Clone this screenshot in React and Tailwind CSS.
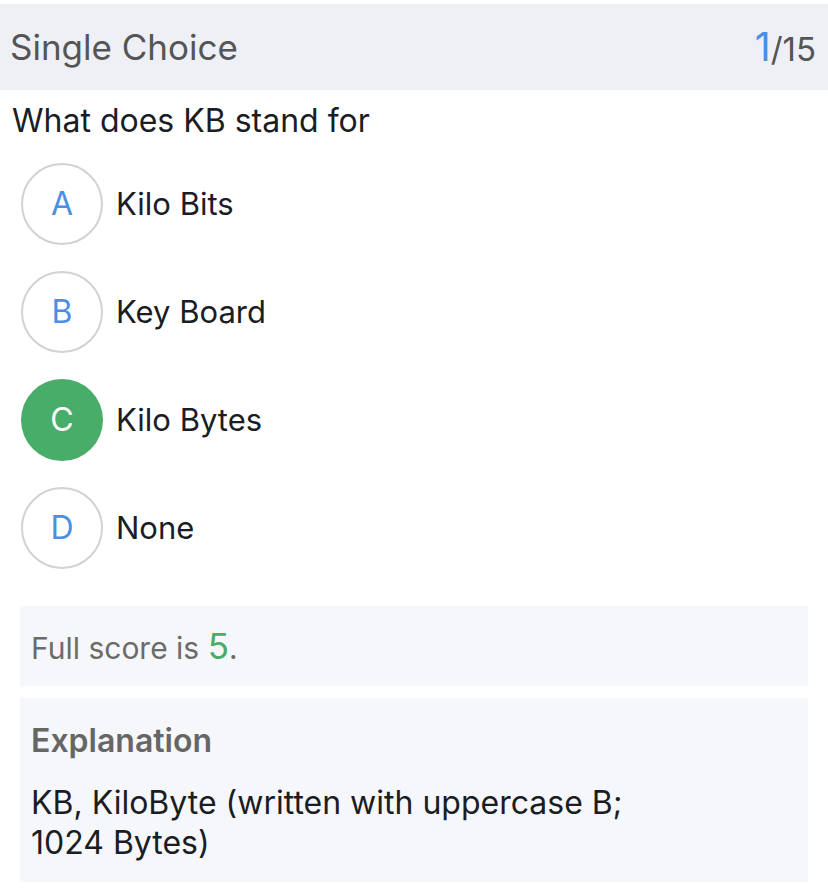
const options = [
  { key: 'A', text: 'Kilo Bits' },
  { key: 'B', text: 'Key Board' },
  { key: 'C', text: 'Kilo Bytes', selected: true },
  { key: 'D', text: 'None' },
]

export default function App() {
  return (
    <div className="min-h-screen bg-white pt-[4px] font-['Inter',sans-serif]">
      <div className="flex h-[86px] items-center justify-between bg-[#eef0f6] pl-[10px] pr-[12px]">
        <span className="text-[35px] text-[#555555]">Single Choice</span>
        <span className="text-[33px] text-[#555555]">
          <span className="text-[39px] text-[#4a8fe3]">1</span>/15
        </span>
      </div>

      <div className="px-[12px] pt-[7px] text-[32px] text-[#1a1d24]">What does KB stand for</div>

      <div className="mt-[18px] flex flex-col gap-[26px] pl-[21px]">
        {options.map((o) => (
          <div key={o.key} className="flex items-center gap-[13px]">
            <div
              className={
                o.selected
                  ? 'flex h-[82px] w-[82px] items-center justify-center rounded-full bg-[#48ad68] text-[32px] text-white'
                  : 'flex h-[82px] w-[82px] items-center justify-center rounded-full border-2 border-[#d2d2d2] text-[32px] text-[#4a8fe3]'
              }
            >
              {o.key}
            </div>
            <span className="text-[31px] text-[#1a1d24]">{o.text}</span>
          </div>
        ))}
      </div>

      <div className="mx-[20px] mt-[37px] flex h-[80px] items-center bg-[#f6f7fb] px-[11px] text-[30px] text-[#6b6b6b]">
        <span>
          Full score is <span className="text-[35px] text-[#48ad68]">5</span>.
        </span>
      </div>

      <div className="mx-[20px] mt-[12px] bg-[#f6f7fb] px-[11px] pb-[19px] pt-[19px]">
        <div className="text-[32px] font-semibold text-[#666666]">Explanation</div>
        <div className="mt-[18px] text-[32px] leading-[40px] text-[#1a1d24]">
          KB, KiloByte (written with uppercase B;
          <br />
          1024 Bytes)
        </div>
      </div>
    </div>
  )
}
